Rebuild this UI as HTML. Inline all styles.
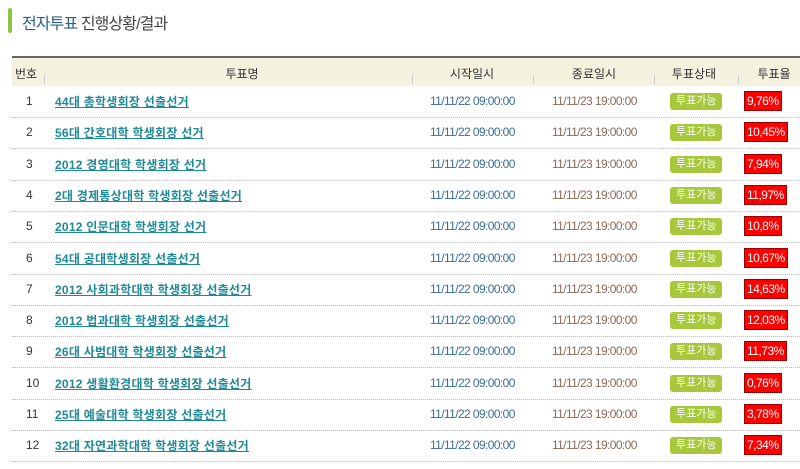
<!DOCTYPE html>
<html><head><meta charset="utf-8"><style>
body{margin:0;width:800px;height:469px;background:#fff;position:relative;overflow:hidden;font-family:"Liberation Sans","Noto Sans CJK KR","NanumGothic",sans-serif;font-size:12px;color:#333}
.bar{position:absolute;left:8px;top:8px;width:4px;height:25px;background:#8cc63f;border-radius:2px}
.title{position:absolute;left:22px;top:10px;font-size:16px;color:#444;letter-spacing:-0.9px}
.title b{color:#2a6283;font-weight:normal}
.thead{position:absolute;left:12px;top:56px;width:788px;height:28px;background:#f4f1de;border-top:2px solid #666}
.th{position:absolute;top:7px;font-size:12px;color:#333;transform:translateX(-50%);white-space:nowrap}
.sep{position:absolute;top:17px;width:1px;height:9px;background:#ccc}
.row{position:absolute;left:12px;width:788px;height:31px;border-bottom:1px dotted #bbb}
.c{position:absolute;top:8px;white-space:nowrap}
.n{left:14px;width:0;}
.name{left:43px;color:#1f8a96;font-weight:bold;text-decoration:underline;letter-spacing:0.25px;top:7px}
.sd{left:418px;color:#3c6e94;letter-spacing:-0.6px}
.ed{left:540px;color:#8a6a5a;letter-spacing:-0.6px}
.st{left:658px;top:7px;background:#a6c83a;color:#fff;border-radius:3px;padding:1px 6px;font-size:11px;height:15px;line-height:15px}
.rt{left:732px;top:5px;background:#f00;color:#fff;border:1px solid #900;padding:1px 2px;height:16px;line-height:16px;letter-spacing:-0.5px}
</style></head><body>
<div class="bar"></div>
<div class="title"><b>전자투표</b> 진행상황/결과</div>
<div class="thead">
<span class="th" style="left:14px">번호</span>
<span class="th" style="left:230px">투표명</span>
<span class="th" style="left:460px">시작일시</span>
<span class="th" style="left:582px">종료일시</span>
<span class="th" style="left:682px">투표상태</span>
<span class="th" style="left:762px">투표율</span>
<div class="sep" style="left:32px"></div><div class="sep" style="left:400px"></div><div class="sep" style="left:521px"></div><div class="sep" style="left:642px"></div><div class="sep" style="left:726px"></div>
</div>
<div class="row" style="top:86px"><span class="c n">1</span><span class="c name">44대 총학생회장 선출선거</span><span class="c sd">11/11/22 09:00:00</span><span class="c ed">11/11/23 19:00:00</span><span class="c st">투표가능</span><span class="c rt">9,76%</span></div>
<div class="row" style="top:117.3px"><span class="c n">2</span><span class="c name">56대 간호대학 학생회장 선거</span><span class="c sd">11/11/22 09:00:00</span><span class="c ed">11/11/23 19:00:00</span><span class="c st">투표가능</span><span class="c rt">10,45%</span></div>
<div class="row" style="top:148.6px"><span class="c n">3</span><span class="c name">2012 경영대학 학생회장 선거</span><span class="c sd">11/11/22 09:00:00</span><span class="c ed">11/11/23 19:00:00</span><span class="c st">투표가능</span><span class="c rt">7,94%</span></div>
<div class="row" style="top:179.9px"><span class="c n">4</span><span class="c name">2대 경제통상대학 학생회장 선출선거</span><span class="c sd">11/11/22 09:00:00</span><span class="c ed">11/11/23 19:00:00</span><span class="c st">투표가능</span><span class="c rt">11,97%</span></div>
<div class="row" style="top:211.2px"><span class="c n">5</span><span class="c name">2012 인문대학 학생회장 선거</span><span class="c sd">11/11/22 09:00:00</span><span class="c ed">11/11/23 19:00:00</span><span class="c st">투표가능</span><span class="c rt">10,8%</span></div>
<div class="row" style="top:242.5px"><span class="c n">6</span><span class="c name">54대 공대학생회장 선출선거</span><span class="c sd">11/11/22 09:00:00</span><span class="c ed">11/11/23 19:00:00</span><span class="c st">투표가능</span><span class="c rt">10,67%</span></div>
<div class="row" style="top:273.8px"><span class="c n">7</span><span class="c name">2012 사회과학대학 학생회장 선출선거</span><span class="c sd">11/11/22 09:00:00</span><span class="c ed">11/11/23 19:00:00</span><span class="c st">투표가능</span><span class="c rt">14,63%</span></div>
<div class="row" style="top:305.1px"><span class="c n">8</span><span class="c name">2012 법과대학 학생회장 선출선거</span><span class="c sd">11/11/22 09:00:00</span><span class="c ed">11/11/23 19:00:00</span><span class="c st">투표가능</span><span class="c rt">12,03%</span></div>
<div class="row" style="top:336.4px"><span class="c n">9</span><span class="c name">26대 사범대학 학생회장 선출선거</span><span class="c sd">11/11/22 09:00:00</span><span class="c ed">11/11/23 19:00:00</span><span class="c st">투표가능</span><span class="c rt">11,73%</span></div>
<div class="row" style="top:367.7px"><span class="c n">10</span><span class="c name">2012 생활환경대학 학생회장 선출선거</span><span class="c sd">11/11/22 09:00:00</span><span class="c ed">11/11/23 19:00:00</span><span class="c st">투표가능</span><span class="c rt">0,76%</span></div>
<div class="row" style="top:399px"><span class="c n">11</span><span class="c name">25대 예술대학 학생회장 선출선거</span><span class="c sd">11/11/22 09:00:00</span><span class="c ed">11/11/23 19:00:00</span><span class="c st">투표가능</span><span class="c rt">3,78%</span></div>
<div class="row" style="top:430.3px"><span class="c n">12</span><span class="c name">32대 자연과학대학 학생회장 선출선거</span><span class="c sd">11/11/22 09:00:00</span><span class="c ed">11/11/23 19:00:00</span><span class="c st">투표가능</span><span class="c rt">7,34%</span></div>
</body></html>
